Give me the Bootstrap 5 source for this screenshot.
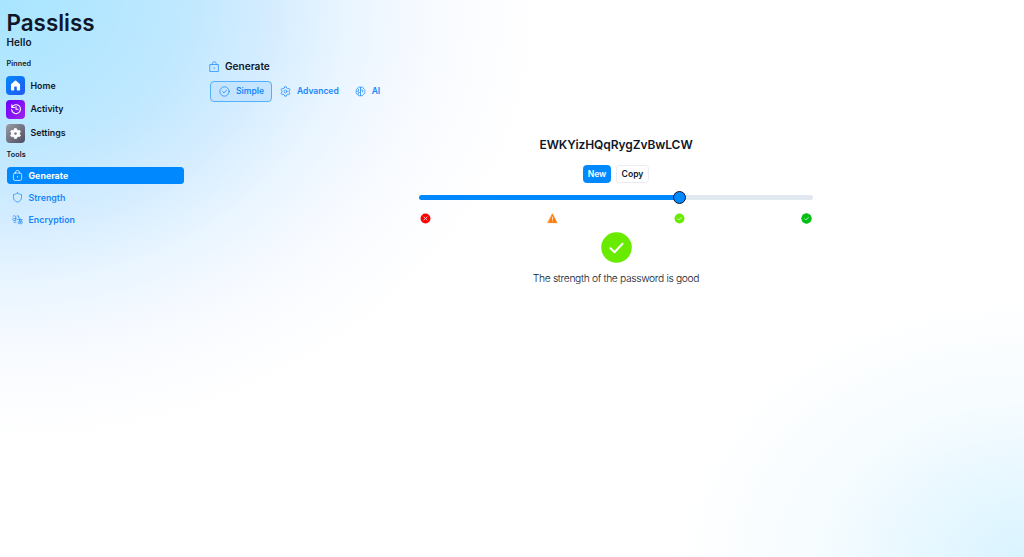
<!DOCTYPE html>
<html lang="en">
<head>
<meta charset="utf-8">
<meta name="viewport" content="width=device-width, initial-scale=1">
<title>Passliss</title>
<link href="https://cdn.jsdelivr.net/npm/bootstrap@5.3.0/dist/css/bootstrap.min.css" rel="stylesheet">
<style>
html, body { height: 100%; }
body {
  font-family: Inter, "Liberation Sans", sans-serif; font-size: 9px; line-height: 12px; color: #0f172a; overflow: hidden;
  background:
    radial-gradient(ellipse 350px 260px at 100% 100%, #d9f4ff, #eaf8ff 35%, #f6fcff 60%, rgba(255,255,255,0)),
    radial-gradient(ellipse 550px 450px at 0 0, #a8e5ff, #bfe8ff 33%, #d3ecff 48%, #e9f5ff 63%, #f5f9ff 75%, #fcfdff 88%, #fff) #fff;
}
svg { display: block; flex: none; fill: none; stroke: currentColor; stroke-width: 1.3; stroke-linecap: round; stroke-linejoin: round; }
.side { width: 190px; padding: 9px 6.5px 0; }
.brand { font-size: 22.4px; line-height: 28px; font-weight: 600; margin: 0; }
.hello { font-size: 10px; line-height: 12px; font-weight: 600; margin: -1px 0 0; letter-spacing: .1px; }
.caption { font-size: 7.2px; line-height: 10px; font-weight: 600; letter-spacing: .1px; }
.cap-pinned { margin-top: 11px; }
.cap-tools { margin-top: 7.6px; }
.pin { height: 19px; gap: 5px; color: #0f172a; font-weight: 600; font-size: 8.8px; letter-spacing: .05px; margin-left: -.1px; }
.pins { gap: 4.8px; margin-top: 7px; }
.tile { width: 19px; height: 19px; border-radius: 4px; color: #fff; }
.t-home { background: linear-gradient(135deg, #0088ff, #2457ee); }
.t-act { background: linear-gradient(135deg, #6c00ff, #9c25e8); }
.t-act svg { stroke-width: 1.8; }
.t-set { background: linear-gradient(135deg, #9b9da5, #4c4c60); }
.tools { margin-top: 7.2px; gap: 5px; }
.tool { height: 17px; width: 177px; padding: 0 5.5px; gap: 5.5px; border-radius: 3.5px; font-size: 8.8px; font-weight: 600; color: #1687fb; letter-spacing: .02px; }
.tool.active { background: #0088ff; color: #fff; font-weight: 700; }
.main { padding: 60px 0 0 18px; }
.head { height: 13px; gap: 5px; font-size: 10.1px; font-weight: 600; margin: 0; }
.blue { color: #1687fb; }
.tabs { margin-top: 8px; margin-left: 2px; }
.tab { height: 21px; border: 1px solid transparent; border-radius: 4px; padding: 0 7px 1px 7.5px; gap: 5.5px; color: #1687fb; font-size: 8.5px; font-weight: 600; }
.tab.active { border-color: #55b0fb; background: #c5e4ff; gap: 6.5px; }
.work { width: 394px; margin: 35px 0 0 211px; }
.pass { font-size: 12px; line-height: 15px; font-weight: 600; letter-spacing: -.07px; }
.acts { gap: 5px; margin-top: 13px; }
.act { height: 18px; border-radius: 3.5px; font-size: 8.6px; line-height: 10px; font-weight: 600; padding: 0; border: 1px solid #e8edf5; background: #fff; color: #0f172a; }
.act.new { width: 28px; background: #0088ff; border-color: #0088ff; color: #fff; }
.act.copy { width: 33px; }
.form-range { display: block; height: 13px; margin-top: 8px; }
.form-range::-webkit-slider-runnable-track { height: 5px; border-radius: 3px; background: linear-gradient(90deg, #0088ff 66%, #e2e8f0 66%); }
.form-range::-webkit-slider-thumb { width: 13px; height: 13px; margin-top: -4px; background: #0088ff; border: 1.5px solid #0f172a; }
.marks { padding: 0 1px; margin-top: 9px; }
.result { margin-top: 8px; }
.result .check { stroke-width: 2; }
.msg { font-size: 10.3px; font-weight: 300; line-height: 14px; margin-top: 8px; letter-spacing: -.35px; }
</style>
</head>
<body>
<svg width="0" height="0" class="position-absolute">
  <symbol id="lock" viewBox="0 0 20 20"><rect x="2.500" y="5.500" width="15" height="13.500" rx="3"/><path d="M6.500 5.500V4a3 3 0 0 1 3-3h1a3 3 0 0 1 3 3v1.500M10 11.500v1.500"/></symbol>
  <symbol id="gear" viewBox="0 0 20 20"><path d="M8.500 1.500h3l.7 2.500 1.900 1.100 2.600-.6 1.500 2.600L16.400 9v2l1.800 1.900-1.500 2.600-2.600-.6-1.900 1.100-.7 2.500h-3L7.800 16l-1.900-1.100-2.600.6-1.500-2.600L3.600 11V9L1.800 7.100l1.500-2.600 2.600.6L7.800 4z"/><circle cx="10" cy="10" r="2.600"/></symbol>
</svg>
<div class="d-flex h-100">
  <aside class="side flex-shrink-0">
    <h1 class="brand">Passliss</h1>
    <p class="hello">Hello</p>
    <div class="caption cap-pinned">Pinned</div>
    <nav class="pins d-flex flex-column">
      <a class="pin d-flex align-items-center text-decoration-none" href="#"><span class="tile t-home d-flex align-items-center justify-content-center"><svg width="13" height="13" viewBox="0 0 20 20"><path fill="#fff" stroke="none" d="M9 2.600a1.500 1.500 0 0 1 2 0l5.500 5c.3.300.5.700.5 1.100V16a1.500 1.500 0 0 1-1.500 1.500H13a1 1 0 0 1-1-1v-4a1 1 0 0 0-1-1H9a1 1 0 0 0-1 1v4a1 1 0 0 1-1 1H4.500A1.500 1.500 0 0 1 3 16V8.700c0-.4.200-.8.500-1.100z"/></svg></span>Home</a>
      <a class="pin d-flex align-items-center text-decoration-none" href="#"><span class="tile t-act d-flex align-items-center justify-content-center"><svg width="12" height="12" viewBox="0 0 20 20"><path d="M3 3v4.500h4.500M3.300 7.200A7.400 7.400 0 1 1 2.700 11M10 6v4.500h3.500"/></svg></span>Activity</a>
      <a class="pin d-flex align-items-center text-decoration-none" href="#"><span class="tile t-set d-flex align-items-center justify-content-center"><svg width="13" height="13" viewBox="0 0 20 20"><path fill="#fff" fill-rule="evenodd" stroke="#fff" d="M8.500 2.500h3l.6 2 1.900 1.100 2.200-.5 1.400 2.500L16.200 9v2l1.400 1.400-1.400 2.500-2.200-.5-1.900 1.100-.6 2h-3l-.6-2L6 14.400l-2.200.5-1.400-2.500L3.800 11V9L2.400 7.600l1.400-2.500 2.200.5 1.900-1.100zM10 7.300a2.700 2.700 0 1 0 0 5.400 2.700 2.700 0 0 0 0-5.400z"/></svg></span>Settings</a>
    </nav>
    <div class="caption cap-tools">Tools</div>
    <nav class="tools d-flex flex-column">
      <a class="tool active d-flex align-items-center text-decoration-none" href="#"><svg width="11" height="11"><use href="#lock"/></svg>Generate</a>
      <a class="tool d-flex align-items-center text-decoration-none" href="#"><svg width="11" height="11" viewBox="0 0 20 20"><path d="M10 1.800c2.300 1.700 4.700 2.500 7.300 2.700V10c0 4-2.500 6.700-7.300 8.500C5.200 16.700 2.700 14 2.700 10V4.500C5.300 4.300 7.700 3.500 10 1.800z"/></svg>Strength</a>
      <a class="tool d-flex align-items-center text-decoration-none" href="#"><svg width="11" height="11" viewBox="0 0 20 20"><path d="M1.500 4.500C3 2.500 7 2.500 7 6v6M7 8C3.500 7.500 1.200 8 1.200 10s3.800 3 5.800.5M9.500 3.500H12V7M7 15H3.500M10.500 10h8M14 7.500c-.5 5 .2 8 1 9.500M17 12c-1 3.500-3.500 6-5 5.500s-1.500-4 2-4.800 5 .8 4.800 2.600-1.300 2.700-2.500 3"/></svg>Encryption</a>
    </nav>
  </aside>
  <main class="main flex-grow-1">
    <h2 class="head d-flex align-items-center"><svg class="blue" width="12" height="11" viewBox="-1 0 21 20"><rect x="2.500" y="6.500" width="15" height="12.500"/><path d="M6.500 6.500V5a3.500 3.500 0 0 1 7 0v1.500M8.800 13h2.400"/></svg>Generate</h2>
    <div class="tabs d-flex">
      <a class="tab active d-flex align-items-center text-decoration-none" href="#"><svg width="11" height="11" viewBox="0 0 20 20"><circle cx="10" cy="10" r="8.500"/><path d="m6.500 10.200 2.500 2.500 4.700-5"/></svg>Simple</a>
      <a class="tab d-flex align-items-center text-decoration-none" href="#"><svg width="11" height="11"><use href="#gear"/></svg>Advanced</a>
      <a class="tab d-flex align-items-center text-decoration-none" href="#"><svg width="11" height="11" viewBox="0 0 20 20"><path d="M10 2v16M10 3C8 .8 5 2 5 4.500 2.500 5 1.500 7.500 2.500 9.500 1 12 2.500 15 5 15.300 5.500 18 8.500 19 10 17M10 3c2-2.200 5-1 5 1.500 2.500.5 3.500 3 2.500 5 1.500 2.500 0 5.500-2.500 5.800-.5 2.700-3.500 3.700-5 1.700M3 9.500h3.500V6M6 15v-3h4M10 7.500h4V11"/></svg>AI</a>
    </div>
    <section class="work">
      <div class="pass text-center">EWKYizHQqRygZvBwLCW</div>
      <div class="acts d-flex justify-content-center"><button class="act new">New</button><button class="act copy">Copy</button></div>
      <input class="form-range" type="range" min="0" max="3" value="2" aria-label="Strength">
      <div class="marks d-flex justify-content-between">
        <svg width="11" height="11" viewBox="0 0 20 20"><circle cx="10" cy="10" r="9" fill="#f00" stroke="none"/><path stroke="#fff" d="m7 7 6 6m0-6-6 6"/></svg>
        <svg width="11" height="11" viewBox="0 0 20 20"><path fill="#ff7b0a" stroke="#ff7b0a" d="m10 2 8 15.500H2z"/><path stroke="#fff" d="M10 7.500V12m0 2.500v.2"/></svg>
        <svg width="11" height="11" viewBox="0 0 20 20"><circle cx="10" cy="10" r="9" fill="#68eb00" stroke="none"/><path stroke="#fff" d="m6.500 10.500 2.300 2.300L13.500 8"/></svg>
        <svg width="11" height="11" viewBox="0 0 20 20"><path fill="#00bf10" stroke="#00bf10" d="M7 2 10 1l3 1 3.500 1.500L18 7l1 3-1 3-1.500 3.500L13 18l-3 1-3-1-3.500-1.500L2 13l-1-3 1-3 1.500-3.500z"/><path stroke="#fff" d="m6.500 10.500 2.300 2.300L13.500 8"/></svg>
      </div>
      <div class="result d-flex flex-column align-items-center">
        <svg width="31" height="31" viewBox="0 0 31 31"><circle cx="15.500" cy="15.500" r="15.300" fill="#68eb00" stroke="none"/><path class="check" stroke="#fff" d="m9.500 16.300 4 4 8-8.600"/></svg>
        <div class="msg">The strength of the password is good</div>
      </div>
    </section>
  </main>
</div>
<script src="https://cdn.jsdelivr.net/npm/bootstrap@5.3.0/dist/js/bootstrap.bundle.min.js"></script>
</body>
</html>
